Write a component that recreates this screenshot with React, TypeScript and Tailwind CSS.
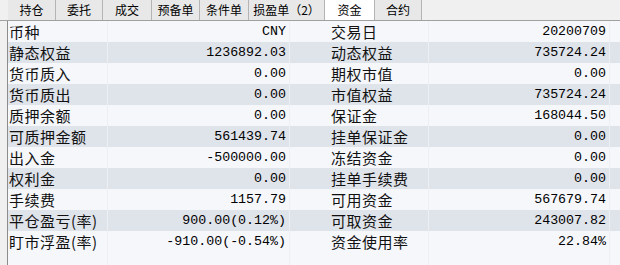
import React from "react";

const tabs: { label: string; w: number; active?: boolean }[] = [
  { label: "持仓", w: 48 },
  { label: "委托", w: 47 },
  { label: "成交", w: 49 },
  { label: "预备单", w: 48 },
  { label: "条件单", w: 49 },
  { label: "损盈单（2）", w: 76 },
  { label: "资金", w: 50, active: true },
  { label: "合约", w: 47 },
];

const rows: [string, string, string, string][] = [
  ["币种", "CNY", "交易日", "20200709"],
  ["静态权益", "1236892.03", "动态权益", "735724.24"],
  ["货币质入", "0.00", "期权市值", "0.00"],
  ["货币质出", "0.00", "市值权益", "735724.24"],
  ["质押余额", "0.00", "保证金", "168044.50"],
  ["可质押金额", "561439.74", "挂单保证金", "0.00"],
  ["出入金", "-500000.00", "冻结资金", "0.00"],
  ["权利金", "0.00", "挂单手续费", "0.00"],
  ["手续费", "1157.79", "可用资金", "567679.74"],
  ["平仓盈亏(率)", "900.00(0.12%)", "可取资金", "243007.82"],
  ["盯市浮盈(率)", "-910.00(-0.54%)", "资金使用率", "22.84%"],
];

const cjk = { fontFamily: '"Noto Sans CJK SC", "Noto Sans", sans-serif' };
const mono = { fontFamily: '"Liberation Mono", "DejaVu Sans Mono", monospace' };

export default function App() {
  return (
    <div className="w-[620px] h-[265px] bg-[#f0f0f0] overflow-hidden flex flex-col" style={cjk}>
      <div className="h-[21px] flex pl-[8px] border-b border-[#a0a0a0] shrink-0">
        {tabs.map((t) => (
          <div
            key={t.label}
            style={{ width: t.w }}
            className={`h-full flex items-center justify-center text-[12px] leading-[14px] text-black border-r border-[#b4b4b4] ${
              t.active ? "bg-white" : "bg-[#e8e8e8]"
            }`}
          >
            {t.label}
          </div>
        ))}
      </div>
      <div className="flex-1 ml-[7px] border-l border-[#8c8c8c] bg-[#f5f7fb] flex flex-col">
        {rows.map((r, i) => (
          <div
            key={i}
            className={`h-[21px] grid grid-cols-[100px_182px_38px_101px_181px_1fr] ${
              i % 2 === 0 ? "bg-[#f5f7fb]" : "bg-[#dfe3ea]"
            }`}
          >
            <div className="flex items-center pl-[1px] text-[15px] leading-[17px] tracking-[0.5px] text-[#111] border-r border-[#eceff4] whitespace-nowrap overflow-hidden">
              {r[0]}
            </div>
            <div
              className="flex items-center justify-end pr-[3px] text-[13.3px] leading-[15px] text-black border-r border-[#eceff4] whitespace-nowrap overflow-hidden"
              style={mono}
            >
              {r[1]}
            </div>
            <div />
            <div className="flex items-center pl-[3px] text-[15px] leading-[17px] tracking-[0.5px] text-[#111] border-r border-[#eceff4] whitespace-nowrap overflow-hidden">
              {r[2]}
            </div>
            <div
              className="flex items-center justify-end pr-[3px] text-[13.3px] leading-[15px] text-black border-r border-[#eceff4] whitespace-nowrap overflow-hidden"
              style={mono}
            >
              {r[3]}
            </div>
            <div />
          </div>
        ))}
        <div className="flex-1 grid grid-cols-[100px_182px_38px_101px_181px_1fr]">
          <div className="border-r border-[#eceff4]" />
          <div className="border-r border-[#eceff4]" />
          <div />
          <div className="border-r border-[#eceff4]" />
          <div className="border-r border-[#eceff4]" />
          <div />
        </div>
      </div>
    </div>
  );
}
